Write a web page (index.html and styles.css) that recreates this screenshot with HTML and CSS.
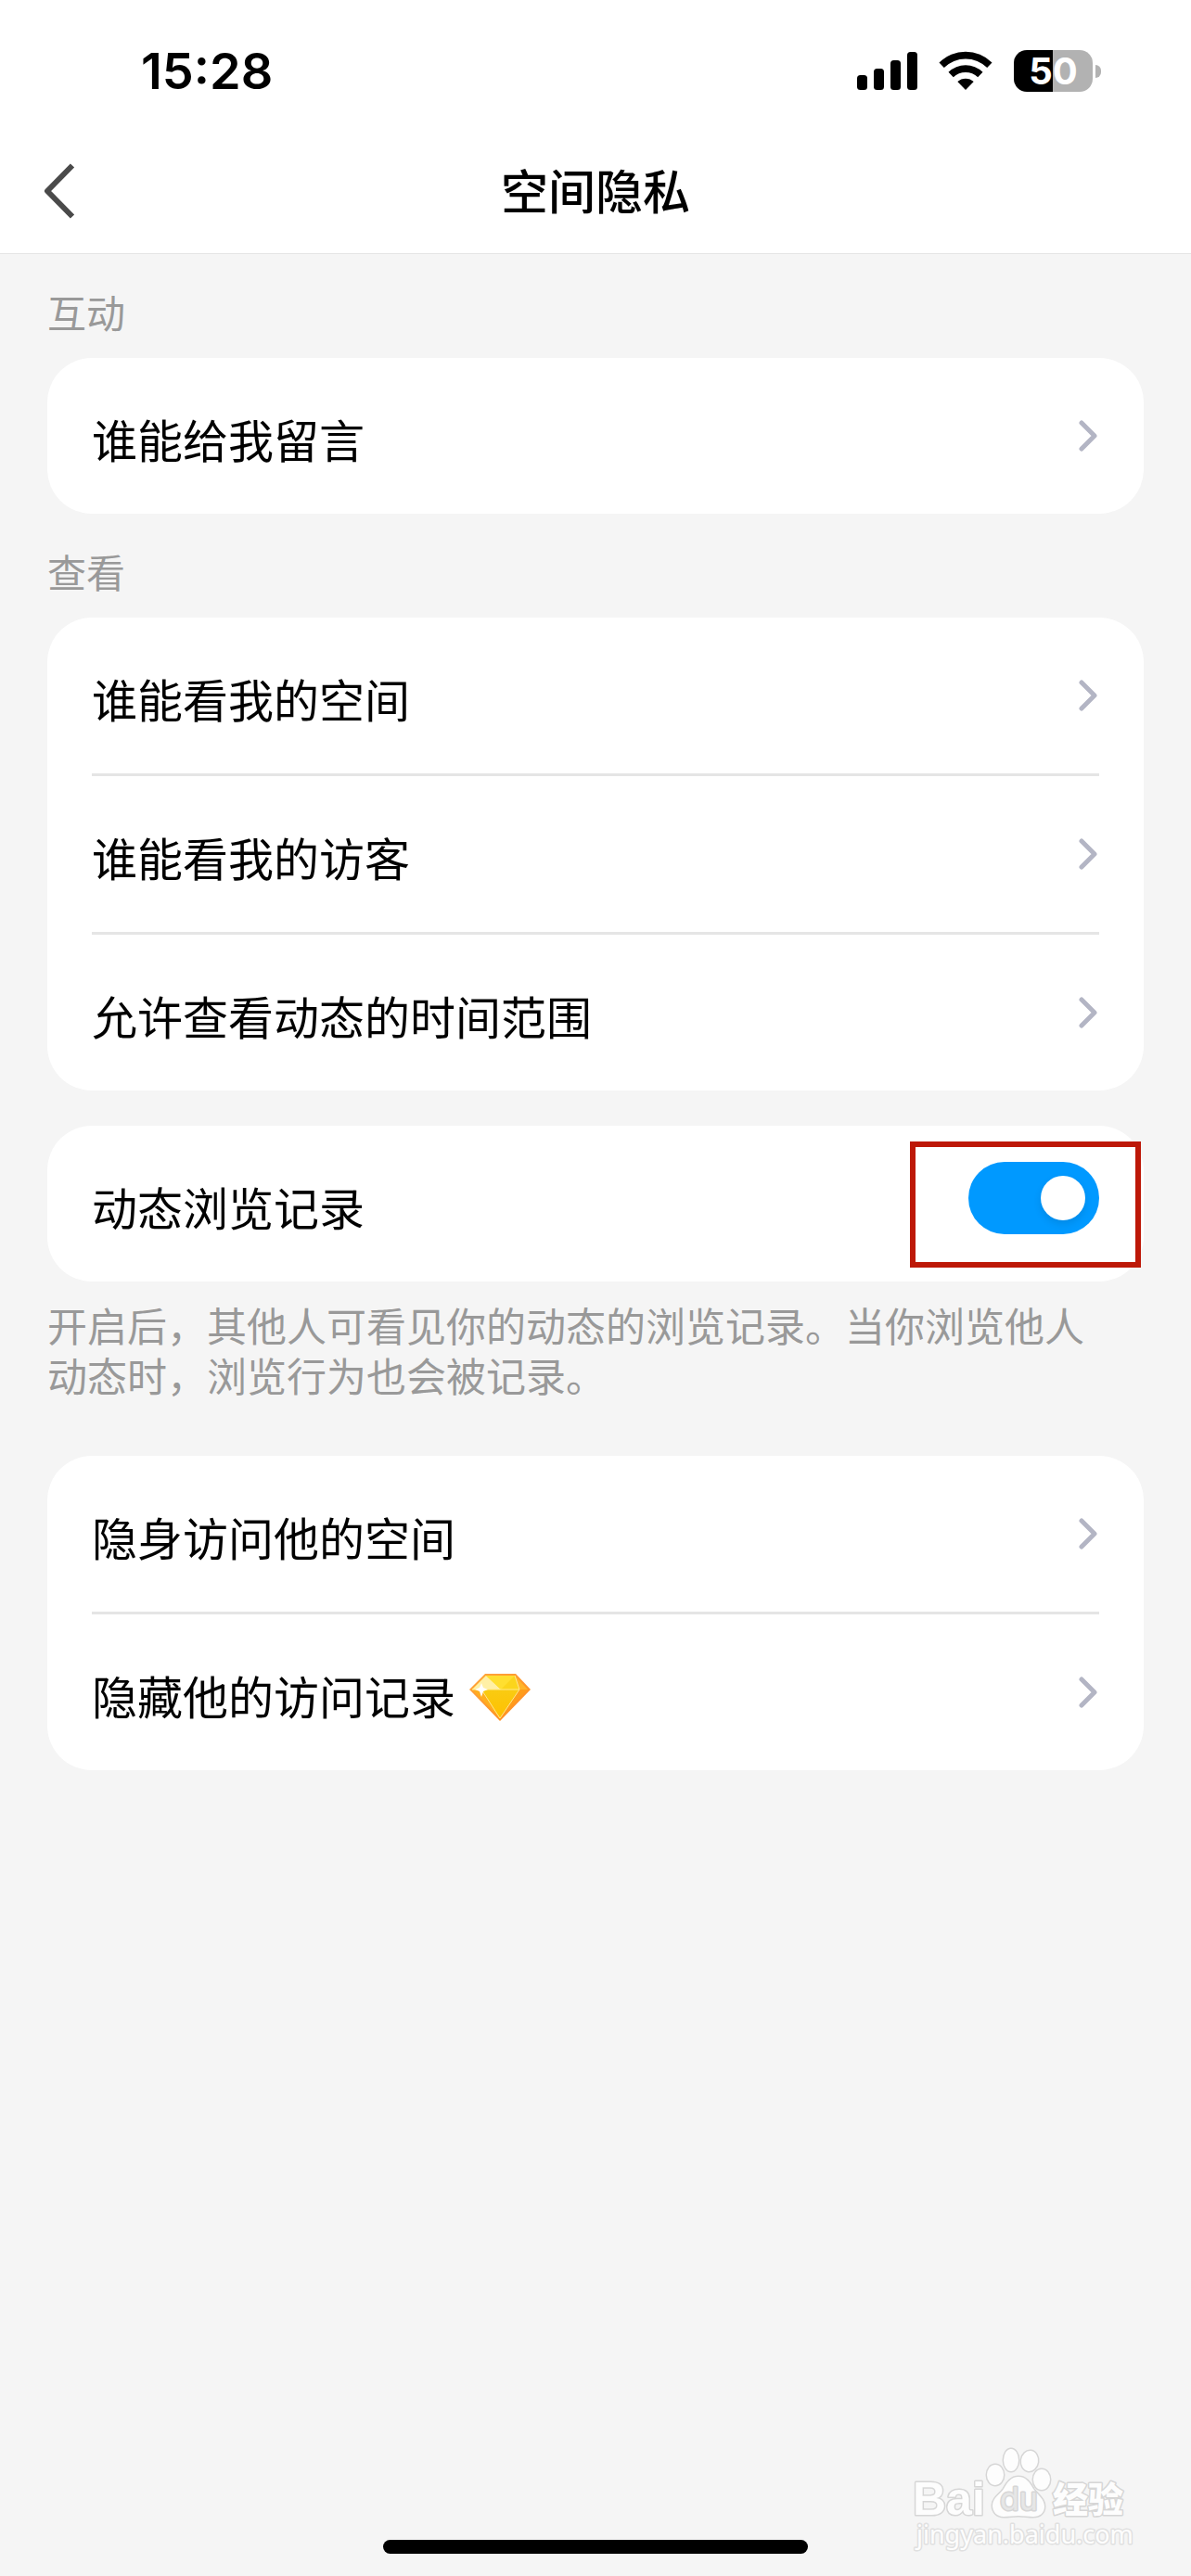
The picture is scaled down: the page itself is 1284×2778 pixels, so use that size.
FILE: index.html
```html
<!DOCTYPE html>
<html lang="zh-CN">
<head>
  <meta charset="UTF-8" />
  <meta name="viewport" content="width=device-width, initial-scale=1" />
  <title>空间隐私</title>
  <link rel="stylesheet" href="styles.css">
</head>
<body>
  <header class="top">
    <div class="status">
      <span class="time">15:28</span>
      <div class="status-icons">
        <svg class="signal" width="65" height="41" viewBox="0 0 65 41">
          <rect x="0" y="25" width="11" height="16" rx="3.5" />
          <rect x="18" y="18" width="11" height="23" rx="3.5" />
          <rect x="36" y="9" width="11" height="32" rx="3.5" />
          <rect x="54" y="0" width="11" height="41" rx="3.5" />
        </svg>
        <svg class="wifi" width="58" height="42" viewBox="0 0 58 42">
          <path d="M0.5 12.5a40.5 40.5 0 0 1 57 0l-5.3 5.6a33 33 0 0 0-46.4 0z" />
          <path d="M10.5 22.8a26.5 26.5 0 0 1 37 0l-5.3 5.5a19 19 0 0 0-26.4 0z" />
          <path d="M20.3 33a13 13 0 0 1 17.4 0L29 42z" />
        </svg>
        <div class="battery"><span>50</span></div>
      </div>
    </div>
    <nav class="nav">
      <button class="back" aria-label="返回">
        <svg width="34" height="60" viewBox="0 0 34 60"><path d="M31 2.500L4 30l27 27.500" /></svg>
      </button>
      <h1>空间隐私</h1>
    </nav>
  </header>

  <main>
    <h2>互动</h2>
    <div class="card">
      <button class="row">
        <span class="label">谁能给我留言</span>
        <svg class="arrow" viewBox="0 0 22 36"><path d="M3 4l14 14L3 32" /></svg>
      </button>
    </div>

    <h2>查看</h2>
    <div class="card">
      <button class="row">
        <span class="label">谁能看我的空间</span>
        <svg class="arrow" viewBox="0 0 22 36"><path d="M3 4l14 14L3 32" /></svg>
      </button>
      <button class="row">
        <span class="label">谁能看我的访客</span>
        <svg class="arrow" viewBox="0 0 22 36"><path d="M3 4l14 14L3 32" /></svg>
      </button>
      <button class="row">
        <span class="label">允许查看动态的时间范围</span>
        <svg class="arrow" viewBox="0 0 22 36"><path d="M3 4l14 14L3 32" /></svg>
      </button>
    </div>

    <div class="card card-switch">
      <div class="row">
        <label class="label" for="history">动态浏览记录</label>
        <input class="switch" type="checkbox" role="switch" id="history" checked>
      </div>
      <div class="marker"></div>
    </div>
    <p class="note">开启后，其他人可看见你的动态的浏览记录。当你浏览他人动态时，浏览行为也会被记录。</p>

    <div class="card">
      <button class="row">
        <span class="label">隐身访问他的空间</span>
        <svg class="arrow" viewBox="0 0 22 36"><path d="M3 4l14 14L3 32" /></svg>
      </button>
      <button class="row">
        <span class="label">隐藏他的访问记录</span>
        <svg class="gem" width="66" height="51" viewBox="0 0 66 51">
          <defs>
            <linearGradient id="rim" x1="0" y1="0" x2="1" y2="1">
              <stop offset="0" stop-color="#ffa63d" />
              <stop offset="1" stop-color="#ff8a1c" />
            </linearGradient>
            <linearGradient id="body" x1="0" y1="0" x2="0" y2="1">
              <stop offset="0" stop-color="#f9cb12" />
              <stop offset="1" stop-color="#ffc000" />
            </linearGradient>
          </defs>
          <path d="M17 0h33l16 17-33 34L0 17z" fill="url(#rim)" />
          <path d="M18 2h31l5 15H3z" fill="#ffdc26" />
          <path d="M18 2L3 17h31z" fill="#fff0a6" />
          <path d="M18 2l16 15L49 2z" fill="#ffdf30" />
          <path d="M34 17L49 2l5 15z" fill="#fbd51c" />
          <path d="M49 2l5 15h9z" fill="#ffb52a" />
          <path d="M3 17h10l20 31z" fill="#ffae1f" />
          <path d="M13 17h41L33 48z" fill="url(#body)" />
          <path d="M63 17h-9L33 48z" fill="#ff9c1a" />
          <path d="M3 17h51L33 48 13 17M49 2l5 15" fill="none" stroke="#ffe98a" stroke-width="1" />
          <path d="M13 10l2 5 5 2-5 2-2 6-2-6-5-2 5-2z" fill="#fff" />
        </svg>
        <svg class="arrow" viewBox="0 0 22 36"><path d="M3 4l14 14L3 32" /></svg>
      </button>
    </div>
  </main>

  <div class="watermark">
    <svg width="248" height="128" viewBox="0 0 248 128">
      <g class="wm-shape">
        <ellipse cx="93" cy="39" rx="9" ry="11" />
        <ellipse cx="110" cy="23" rx="8" ry="12" />
        <ellipse cx="130" cy="24" rx="9" ry="11" transform="rotate(8 130 24)" />
        <ellipse cx="143" cy="44" rx="9" ry="11" />
        <path d="M118 41c8 0 12 6 16 13 5 7 12 11 12 19 0 7-5 11-12 11-6 0-10-1-16-1s-10 1-16 1c-7 0-12-5-12-12 0-8 8-12 12-18 4-7 8-13 16-13z" />
      </g>
      <text class="wm-brand" x="4" y="82">Bai</text>
      <text class="wm-du" x="98" y="77">du</text>
      <text class="wm-cn" x="155" y="79">经验</text>
      <text class="wm-url" x="8" y="113">jingyan.baidu.com</text>
    </svg>
  </div>
  <div class="home-bar"></div>
</body>
</html>
```
FILE: styles.css
```css
* {
  box-sizing: border-box;
}
body {
  margin: 0;
  min-height: 100vh;
  display: flex;
  flex-direction: column;
  position: relative;
  background: #f5f5f5;
  color: #000;
  font-family: "Noto Sans CJK SC", sans-serif;
}
h1, h2, p {
  margin: 0;
  font-weight: 400;
}
button {
  margin: 0;
  padding: 0;
  border: 0;
  background: none;
  color: inherit;
  font: inherit;
  text-align: left;
}

/* status bar + title */
.top {
  background: #fff;
  border-bottom: 1px solid #e5e5e5;
}
.status {
  height: 138px;
  padding: 14px 106px 0 152px;
  display: flex;
  align-items: center;
  justify-content: space-between;
}
.time {
  font-family: Inter, sans-serif;
  font-size: 54px;
  font-weight: 600;
}
.status-icons {
  display: flex;
  align-items: center;
  gap: 23px;
}
.battery {
  position: relative;
  width: 85px;
  height: 45px;
  border-radius: 14px;
  background: linear-gradient(90deg, #000 50%, #b2b2b2 50%);
  color: #fff;
  font: 700 40px/45px Inter, sans-serif;
  text-align: center;
}
.battery::after {
  content: "";
  position: absolute;
  left: 88px;
  top: 16px;
  width: 6px;
  height: 14px;
  border-radius: 0 6px 6px 0;
  background: #b2b2b2;
}
.nav {
  height: 135px;
  padding: 0 47px;
  display: grid;
  grid-template-columns: 1fr auto 1fr;
  align-items: center;
}
.back {
  display: flex;
}
.back path {
  fill: none;
  stroke: #4a4a4a;
  stroke-width: 6;
  stroke-linejoin: round;
}
h1 {
  padding-bottom: 4px;
  font-size: 51px;
  font-weight: 500;
  line-height: 74px;
}

/* settings list */
main {
  flex: 1;
  padding: 0 51px;
}
h2 {
  padding: 35px 0 23px;
  color: #999;
  font-size: 42px;
  line-height: 54px;
}
.card {
  padding: 0 48px;
  border-radius: 48px;
  background: #fff;
}
.row {
  width: 100%;
  height: 168px;
  display: flex;
  align-items: center;
}
.row + .row {
  height: 171px;
  border-top: 3px solid #e5e5e5;
}
.label {
  padding-top: 6px;
  font-size: 49px;
  line-height: 72px;
}
.arrow {
  width: 22px;
  height: 36px;
  margin-left: auto;
  fill: none;
  stroke: #b3b5c4;
  stroke-width: 5;
  stroke-linecap: round;
  stroke-linejoin: round;
}
.gem {
  margin: 10px 0 0 15px;
}
.card-switch {
  position: relative;
  margin-top: 38px;
}
.switch {
  appearance: none;
  width: 141px;
  height: 78px;
  margin: 0 0 12px auto;
  padding: 15px;
  display: flex;
  border-radius: 39px;
  background: #09f;
}
.switch::before {
  content: "";
  width: 48px;
  height: 48px;
  margin-left: auto;
  border-radius: 50%;
  background: #fff;
  box-shadow: 0 4px 8px rgba(0, 0, 0, 0.1);
}
/* red frame round the switch */
.marker {
  position: absolute;
  top: 17px;
  right: 3px;
  width: 249px;
  height: 136px;
  border: 6px solid #bd1808;
  pointer-events: none;
}
.note {
  padding: 19px 48px 61px 0;
  color: #999;
  font-size: 43px;
  line-height: 54px;
}

.watermark {
  position: absolute;
  right: 56px;
  bottom: 20px;
}
.watermark svg {
  display: block;
}
.wm-shape, .watermark text {
  fill: #fdfdfd;
  stroke: #d6d6d6;
  stroke-width: 3;
  stroke-linejoin: round;
  paint-order: stroke;
}
.wm-brand {
  font: 700 50px "Liberation Sans", sans-serif;
}
.watermark .wm-du {
  font: 400 34px Inter, sans-serif;
  fill: #e6e6e6;
}
.wm-cn {
  font: 900 38px "Noto Sans CJK SC", sans-serif;
}
.watermark .wm-url {
  font: 400 27px "Noto Sans", sans-serif;
  stroke: #e0e0e0;
}
.home-bar {
  width: 458px;
  height: 15px;
  margin: 0 auto 24px;
  border-radius: 8px;
  background: #000;
}
```
